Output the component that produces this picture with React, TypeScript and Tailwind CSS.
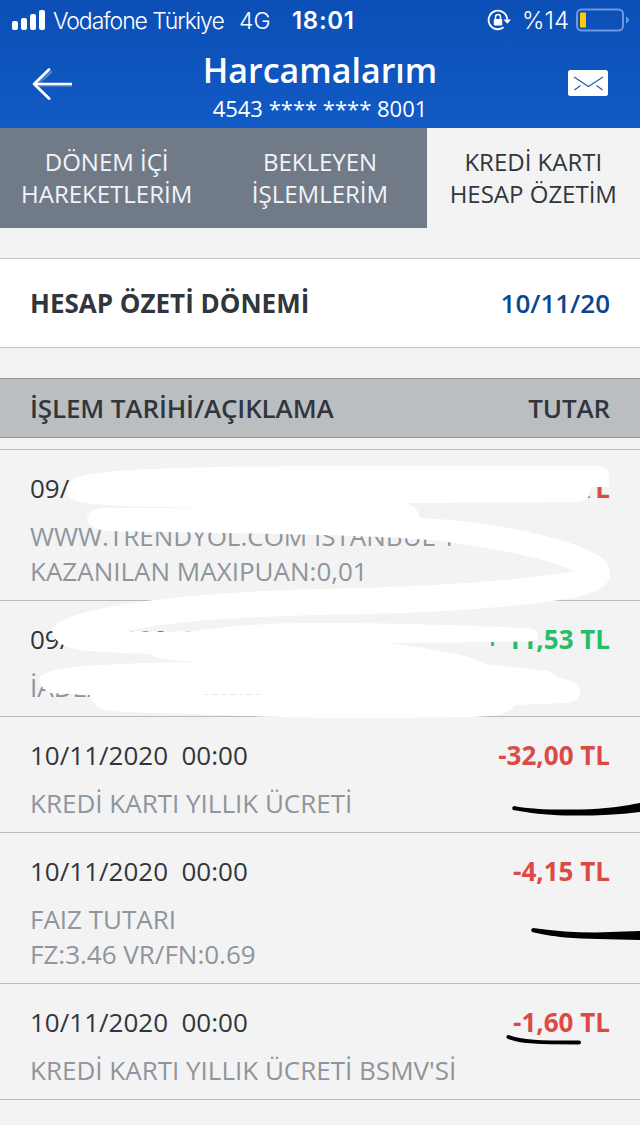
import { clsx } from 'clsx';

interface Transaction {
  date: string;
  amount: string;
  lines: string[];
  income?: boolean;
}

const tabs = [
  { lines: ['DÖNEM İÇİ', 'HAREKETLERİM'] },
  { lines: ['BEKLEYEN', 'İŞLEMLERİM'] },
  { lines: ['KREDİ KARTI', 'HESAP ÖZETİM'], active: true },
];

const transactions: Transaction[] = [
  {
    date: '09/11/2020  00:00',
    amount: '-11,53 TL',
    lines: ['WWW.TRENDYOL.COM ISTANBUL T', 'KAZANILAN MAXIPUAN:0,01'],
  },
  { date: '09/11/2020  00:00', amount: '+ 11,53 TL', lines: ['İADE/'], income: true },
  { date: '10/11/2020  00:00', amount: '-32,00 TL', lines: ['KREDİ KARTI YILLIK ÜCRETİ'] },
  { date: '10/11/2020  00:00', amount: '-4,15 TL', lines: ['FAIZ TUTARI', 'FZ:3.46 VR/FN:0.69'] },
  { date: '10/11/2020  00:00', amount: '-1,60 TL', lines: ["KREDİ KARTI YILLIK ÜCRETİ BSMV'Sİ"] },
];

function StatusBar() {
  return (
    <div className="flex h-10 items-center pl-3 pr-[11px] font-['Inter',sans-serif] text-[23px] leading-10 text-white">
      <svg className="h-5 w-[33px] shrink-0" viewBox="0 0 33 20" fill="currentColor">
        <rect x="0" y="11" width="6" height="9" rx="2" />
        <rect x="9" y="8" width="6" height="12" rx="2" />
        <rect x="18" y="4" width="6" height="16" rx="2" />
        <rect x="27" y="0" width="6" height="20" rx="2" />
      </svg>
      <span className="ml-2 w-[172px] whitespace-nowrap pt-px font-light tracking-[-1.05px]">Vodafone Türkiye</span>
      <span className="ml-[14px] w-[32px] whitespace-nowrap pt-px font-light">4G</span>
      <span className="ml-[21px] w-[66px] whitespace-nowrap pt-px text-[24px] font-semibold tracking-[0.7px]">18:01</span>
      <svg className="ml-auto h-6 w-6 shrink-0" viewBox="0 0 24 24" fill="none" stroke="currentColor" strokeWidth="1.8">
        <path d="M20.2 11.5A9.3 9.3 0 1 0 16.6 19.3" />
        <path d="M16.5 11.5h7.5l-3.7 4.2z" fill="currentColor" stroke="none" />
        <rect x="6.8" y="11" width="8.4" height="6.4" rx="1" fill="currentColor" stroke="none" />
        <path d="M8.5 11V9a2.5 2.5 0 0 1 5 0v2" strokeWidth="1.5" />
      </svg>
      <span className="ml-[11px] w-[48px] whitespace-nowrap pt-px text-[24px] font-light">%14</span>
      <svg className="ml-[6px] h-6 w-[53px] shrink-0" viewBox="0 0 53 24">
        <rect x="1" y="1.5" width="46" height="21" rx="4.5" fill="none" stroke="#6d98df" strokeWidth="2" />
        <rect x="4" y="4.5" width="6" height="15" rx="1" fill="#ffcc00" />
        <path d="M50 8.5q3 1.2 3 3.5t-3 3.5z" fill="#6d98df" />
      </svg>
    </div>
  );
}

function Header() {
  return (
    <header className="h-32 bg-linear-to-b from-[#0b4fb6] to-[#125ac5] text-white">
      <StatusBar />
      <div className="flex h-[88px] items-start justify-between px-8">
        <button className="mt-7 h-8 w-10" aria-label="Geri">
          <svg className="h-8 w-10" viewBox="0 0 40 32" fill="none" strokeWidth="2.6" strokeLinecap="round" strokeLinejoin="round">
            <path d="M19 4 4 17 18 31M4 17.5H40" stroke="#4a80d4" />
            <path d="M17 1.5 2 16 17 30.5M2 16H39" stroke="currentColor" />
          </svg>
        </button>
        <div className="text-center">
          <h1 className="mt-[10px] h-10 text-[34px] leading-10 font-semibold">Harcamalarım</h1>
          <p className="mt-[4px] text-[22px] leading-7">4543 **** **** 8001</p>
        </div>
        <button className="mt-[30px] h-[26px] w-10" aria-label="Mesajlar">
          <svg className="h-[26px] w-10" viewBox="0 0 40 26" fill="none">
            <rect width="40" height="26" rx="2.5" fill="#fff" />
            <path d="m6 7 14.5 9.5L35 7M6.5 20l6-4.5M34.5 20l-6-4.5" stroke="#2858ad" strokeWidth="1.2" />
          </svg>
        </button>
      </div>
    </header>
  );
}

function TransactionRow({ transaction }: { transaction: Transaction }) {
  return (
    <li className="border-t border-[#b9bbbd] px-[30px] pt-[21px] pb-[11px] text-[26px] leading-[35px]">
      <div className="flex justify-between whitespace-pre">
        <span className="text-[#30363c]">{transaction.date}</span>
        <span className={clsx('font-bold', transaction.income ? 'text-[#28bd68]' : 'text-[#dc4a45]')}>
          {transaction.amount}
        </span>
      </div>
      <div className="mt-[13px] text-[#8e959d]">
        {transaction.lines.map((line) => (
          <p key={line}>{line}</p>
        ))}
      </div>
    </li>
  );
}

// Freehand marker: white hides private details, black underlines the fees
function Scribbles() {
  return (
    <svg className="pointer-events-none absolute inset-0 h-[1125px] w-[640px]" viewBox="0 0 640 1125">
      <g fill="#fff">
        <path d="M66 491C66 484 71 479 78 477C92 473 112 471 133 470C180 467 260 466 350 466H598Q608 466 609 476V487H591L590 495Q586 502 575 502L403 503Q418 505 420 518C480 521 530 530 570 543C598 553 610 561 610 573C610 589 590 596 553 601C480 611 400 614 320 615C240 617 170 621 127 631C150 632 175 632 195 631C235 624 290 623 320 623C400 623 480 626 528 628Q538 629 538 635Q538 641 529 641.5L387 643C430 648 464 655 475 659Q480 663 485 664L548 671Q555 674 556 677C575 681 581 685 580 692Q580 702 565 703L514 705C512 715 490 717 460 717C390 719 310 718 250 716C180 713 120 713 105 710Q93 706 90 695L50 693Q40 688 39 680C40 671 65 667 100 665Q150 662 200 662C170 660 153 659 151 654C120 653 90 652 75 649Q53 644 52 630C57 620 75 613 120 605C180 595 250 591 320 589C400 587 500 584 575 571C545 558 490 547 440 541C400 537 330 535 280 534L105 531Q87 527 87 519Q88 508 105 508L210 508C160 507 110 507 80 502Q67 499 66 491Z" />
      </g>
      <path d="M205 694.5h58" stroke="#e4e6e8" strokeWidth="1" strokeDasharray="4 3 7 3" />
      <g fill="#000">
        <path d="M514 806C530 809 550 810 580 809.5C605 809 625 806 640 803V812C615 815 590 816 565 815.5C545 815 530 813 513 810Q511 807 514 806Z" />
        <path d="M533 928C555 931 575 932.5 595 932.5L640 931V940C610 939 585 939 565 937.5C552 936 540 934 532 932Q530 929 533 928Z" />
      </g>
      <path d="M508.5 1037C521 1042 540 1042.500 579 1042.5" fill="none" stroke="#000" strokeWidth="4" strokeLinecap="round" />
    </svg>
  );
}

export default function App() {
  return (
    <div className="relative h-[1125px] w-[640px] overflow-hidden bg-[#f3f3f3] font-['Open_Sans','Noto_Sans',sans-serif]">
      <Header />
      <nav className="flex h-[100px]">
        {tabs.map((tab) => (
          <button
            key={tab.lines[0]}
            className={clsx(
              'flex-1 text-[24px] leading-8',
              tab.active ? 'bg-[#f3f3f3] text-[#30363c]' : 'bg-[#717b87] text-[#f1f4fa]'
            )}
          >
            {tab.lines.map((line) => (
              <span key={line} className="block">{line}</span>
            ))}
          </button>
        ))}
      </nav>
      <section className="mt-[30px] flex h-[90px] items-center justify-between border-y border-[#c1c3c5] bg-white px-[30px] text-[26px] font-semibold">
        <h2 className="font-bold text-[#30363c]">HESAP ÖZETİ DÖNEMİ</h2>
        <span className="text-[#0b4790]">10/11/20</span>
      </section>
      <div className="mt-[30px] flex h-[60px] items-center justify-between border-y border-[#93999e] bg-[#babec1] px-[30px] text-[26px] font-semibold tracking-[-0.13px] text-[#30363c]">
        <span>İŞLEM TARİHİ/AÇIKLAMA</span>
        <span>TUTAR</span>
      </div>
      <ul className="mt-[11px] border-b border-[#b9bbbd]">
        {transactions.map((transaction, index) => (
          <TransactionRow key={index} transaction={transaction} />
        ))}
      </ul>
      <Scribbles />
    </div>
  );
}
